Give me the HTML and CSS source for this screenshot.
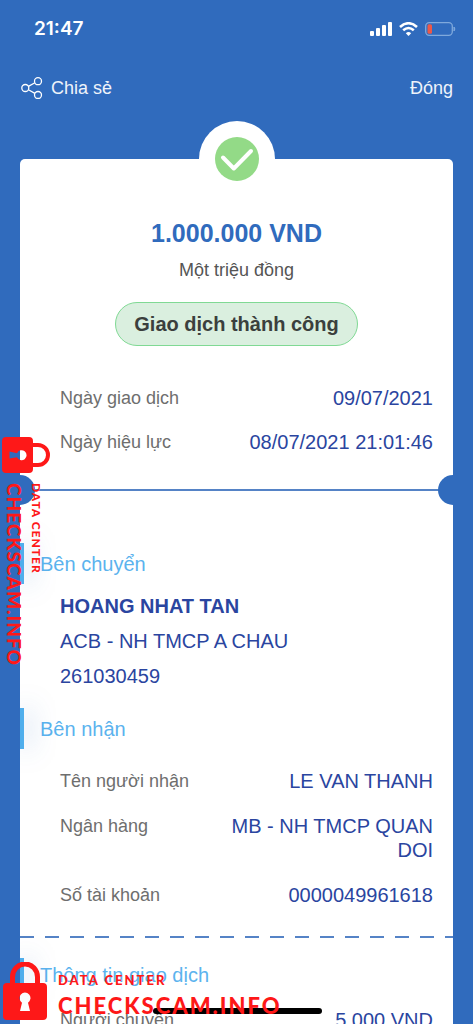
FILE: index.html
```html
<!DOCTYPE html>
<html lang="vi">
<head>
<meta charset="utf-8">
<meta name="viewport" content="width=device-width, initial-scale=1">
<title>Giao dịch thành công</title>
<link rel="stylesheet" href="styles.css">
</head>
<body>
<div class="screen">
  <header class="status">
    <span class="clock">21:47</span>
    <span class="status-icons">
      <svg width="22" height="14" viewBox="0 0 22 14" fill="#fff" aria-hidden="true"><rect y="9" width="4" height="5" rx="1"/><rect x="6" y="6" width="4" height="8" rx="1"/><rect x="12" y="3" width="4" height="11" rx="1"/><rect x="18" width="4" height="14" rx="1"/></svg>
      <svg width="19" height="14" viewBox="0 0 19 14" fill="none" stroke="#fff" stroke-width="2.6" aria-hidden="true"><path d="M1 5Q9.500-2.500 18 5M4.200 8.300Q9.500 3.700 14.800 8.300"/><path d="M9.500 14 6.800 11.200Q9.500 8.800 12.200 11.200Z" fill="#fff" stroke="none"/></svg>
      <svg width="31" height="14" viewBox="0 0 31 14" aria-hidden="true"><rect x=".7" y=".7" width="26.600" height="12.600" rx="3.500" fill="none" stroke="#7fa9dc" stroke-width="1.300"/><rect x="2.500" y="2.300" width="4.500" height="9.400" rx="1.500" fill="#ed5848"/><path d="M29 5q1.800 2 0 4z" fill="#7fa9dc" stroke="#7fa9dc"/></svg>
    </span>
  </header>
  <nav class="nav">
    <button class="nav-btn" type="button">
      <svg width="22" height="22" viewBox="0 0 22 22" fill="none" stroke="#fff" stroke-width="1.300" aria-hidden="true"><circle cx="4.300" cy="11" r="3.500"/><circle cx="17" cy="4.200" r="3.500"/><circle cx="17" cy="18" r="3.500"/><path d="M7.400 9.400 13.900 5.800M7.400 12.700l6.500 3.700"/></svg>
      <span>Chia sẻ</span>
    </button>
    <button class="nav-btn" type="button">Đóng</button>
  </nav>
  <main class="card">
    <div class="badge">
      <svg width="44" height="44" viewBox="0 0 44 44" aria-hidden="true"><circle cx="22" cy="22" r="22" fill="#93da87"/><path d="M8 20.500 18.800 31.500 36 14" fill="none" stroke="#fff" stroke-width="4" stroke-linecap="round" stroke-linejoin="round"/></svg>
    </div>
    <h1 class="amount">1.000.000 VND</h1>
    <p class="words">Một triệu đồng</p>
    <p class="pill">Giao dịch thành công</p>
    <dl class="rows dates">
      <div class="row"><dt>Ngày giao dịch</dt><dd>09/07/2021</dd></div>
      <div class="row"><dt>Ngày hiệu lực</dt><dd>08/07/2021 21:01:46</dd></div>
    </dl>
    <div class="tear"></div>
    <h2 class="section sender-title">Bên chuyển</h2>
    <div class="sender">
      <p><strong>HOANG NHAT TAN</strong></p>
      <p>ACB - NH TMCP A CHAU</p>
      <p>261030459</p>
    </div>
    <h2 class="section">Bên nhận</h2>
    <dl class="rows receiver">
      <div class="row"><dt>Tên người nhận</dt><dd>LE VAN THANH</dd></div>
      <div class="row"><dt>Ngân hàng</dt><dd>MB - NH TMCP QUAN DOI</dd></div>
      <div class="row"><dt>Số tài khoản</dt><dd>0000049961618</dd></div>
    </dl>
    <div class="dashes"></div>
    <h2 class="section section-short">Thông tin giao dịch</h2>
    <dl class="rows fee">
      <div class="row"><dt>Người chuyển</dt><dd>5.000 VND</dd></div>
    </dl>
  </main>
  <div class="home"></div>
  <div class="mark mark-side">
    <svg width="48" height="36" viewBox="0 0 48 36" aria-hidden="true"><path fill="#fe1818" fill-rule="evenodd" d="M4 0H27a4 4 0 0 1 4 4V32a4 4 0 0 1-4 4H4a4 4 0 0 1-4-4V4a4 4 0 0 1 4-4ZM7.500 14.500v7L15 20.200a5 5 0 1 0 0-4Z"/><path d="M31 8h5a10 10 0 0 1 0 20h-5" fill="none" stroke="#fe1818" stroke-width="4"/></svg>
    <div class="mark-text"><span class="mark-small">DATA CENTER</span><span class="mark-big">CHECKSCAM.INFO</span></div>
  </div>
  <div class="mark mark-bottom">
    <svg width="44" height="58" viewBox="0 0 44 58" aria-hidden="true"><path fill="#fe1818" fill-rule="evenodd" d="M4 21H40a4 4 0 0 1 4 4V54a4 4 0 0 1-4 4H4a4 4 0 0 1-4-4V25a4 4 0 0 1 4-4ZM17 49h10l-2-8.300a5.500 5.500 0 1 0-6 0Z"/><path d="M9.500 21v-6a12 12.500 0 0 1 25 0v6" fill="none" stroke="#fe1818" stroke-width="5"/></svg>
    <div class="mark-text"><span class="mark-small">DATA CENTER</span><span class="mark-big">CHECKSCAM.INFO</span></div>
  </div>
</div>
</body>
</html>
```
FILE: styles.css
```css
* { box-sizing: border-box; margin: 0; padding: 0; }

body {
  background: #306bbd;
  color: #2a45a0;
  font-family: "Liberation Sans", Arial, sans-serif;
  font-size: 20px;
  line-height: 24px;
}

.screen {
  position: relative;
  display: flex;
  flex-direction: column;
  height: 100vh;
  overflow: hidden;
}

.status {
  display: flex;
  flex-shrink: 0;
  align-items: center;
  justify-content: space-between;
  padding: 17px 17px 0 34px;
  color: #fff;
}
.clock { font: 600 19px/24px Inter, sans-serif; }
.status-icons { display: flex; align-items: center; gap: 7px; }

.nav {
  display: flex;
  flex-shrink: 0;
  justify-content: space-between;
  padding: 35px 20px 0 21px;
}
.nav-btn {
  display: flex;
  align-items: center;
  gap: 8px;
  border: 0;
  background: none;
  color: #eef3fa;
  font: 18px/24px "Liberation Sans", Arial, sans-serif;
}

.card {
  position: relative;
  flex-shrink: 0;
  margin: 59px 20px 0;
  padding-top: 58px;
  border-radius: 5px 5px 0 0;
  background: #fff;
}
.badge {
  position: absolute;
  top: -38px;
  left: 50%;
  display: grid;
  place-items: center;
  width: 76px;
  height: 76px;
  margin-left: -38px;
  border-radius: 50%;
  background: #fff;
}
.amount {
  color: #306bbd;
  font-size: 25px;
  line-height: 32px;
  text-align: center;
}
.words {
  margin-top: 9px;
  color: #555;
  font-size: 18px;
  text-align: center;
}
.pill {
  width: fit-content;
  margin: 20px auto 0;
  padding: 8px 18px;
  border: 1px solid #80d994;
  border-radius: 22px;
  background: #daefdf;
  color: #3b3f3d;
  font-size: 20px;
  font-weight: bold;
  line-height: 26px;
}

.rows { display: grid; gap: 20px; padding: 0 20px 0 40px; }
.row { display: flex; justify-content: space-between; }
.row dt { flex-shrink: 0; color: #6e6e6e; font-size: 18px; }
.row dd { max-width: 60%; text-align: right; }
.dates { margin-top: 40px; }
.receiver { gap: 21px; margin-top: 20px; }
.fee { margin-top: 17px; padding-bottom: 40px; }

.tear {
  display: flex;
  align-items: center;
  justify-content: space-between;
  height: 30px;
  margin-top: 21px;
  background: linear-gradient(#5583c6, #5583c6) center / 100% 2px no-repeat;
}
.tear::before, .tear::after {
  content: "";
  width: 15px;
  height: 30px;
  background: #306bbd;
}
.tear::before { border-radius: 0 15px 15px 0; }
.tear::after { border-radius: 15px 0 0 15px; }

.section {
  display: flex;
  align-items: center;
  gap: 16px;
  margin-top: 20px;
  color: #5bb3ee;
  font-size: 20px;
  font-weight: normal;
}
.section::before {
  content: "";
  width: 4px;
  height: 41px;
  background: #4faeec;
  box-shadow: 4px 0 24px rgba(48, 107, 189, .5);
  clip-path: inset(-24px -32px -24px 0);
}
.section-short::before { height: 33px; }
.sender-title { margin-top: 38px; }
.sender { padding: 5px 20px 0 40px; line-height: 35px; }
.sender + .section { margin-top: 14px; }

.dashes {
  height: 2px;
  margin-top: 29px;
  background: repeating-linear-gradient(90deg, #5583c6 0 14px, transparent 14px 25px);
}

.home {
  position: absolute;
  bottom: 10px;
  left: 50%;
  width: 169px;
  height: 6px;
  margin-left: -84px;
  border-radius: 3px;
  background: #000;
}

.mark {
  position: absolute;
  display: flex;
  color: #fe1818;
  font-family: Lato, sans-serif;
  font-weight: 900;
  white-space: nowrap;
}
.mark-text { display: flex; flex-direction: column; }
.mark-small { font-size: 13px; line-height: 24px; letter-spacing: 2px; }
.mark-big { font-size: 22px; line-height: 28px; letter-spacing: 2px; }
.mark-side { top: 437px; left: 2px; flex-direction: column; gap: 10px; }
.mark-side .mark-text { writing-mode: vertical-rl; width: 40px; justify-content: space-between; }
.mark-side .mark-small { font-size: 12px; line-height: 12px; letter-spacing: 1px; }
.mark-side .mark-big { font-size: 19px; line-height: 24px; letter-spacing: 1px; }
.mark-bottom { bottom: 4px; left: 3px; gap: 11px; align-items: flex-end; }
```
